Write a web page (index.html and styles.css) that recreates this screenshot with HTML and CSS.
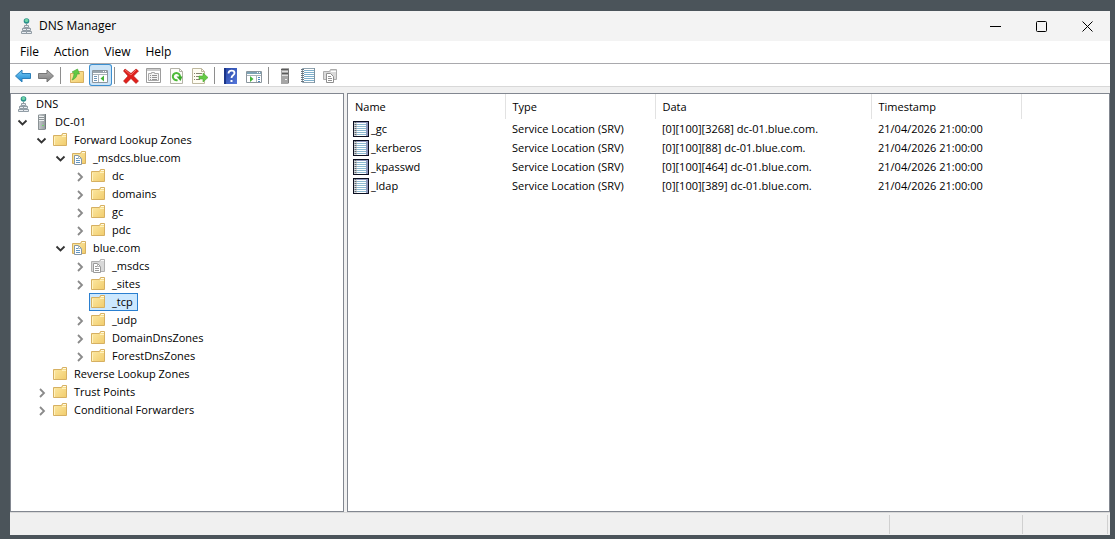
FILE: index.html
```html
<!DOCTYPE html>
<html lang="en">
  <head>
    <meta charset="utf-8" />
    <meta name="viewport" content="width=device-width, initial-scale=1" />
    <title>DNS Manager</title>
    <link rel="stylesheet" href="styles.css">
  </head>
  <body>
    <!-- Icon sprite -->
    <svg class="sprite" aria-hidden="true">
      <defs>
        <linearGradient id="gold" x1="0" y1="0" x2="1" y2="1">
          <stop offset="0" stop-color="#fdeaa6" />
          <stop offset="1" stop-color="#f1cc6c" />
        </linearGradient>
        <linearGradient id="blue" x1="0" y1="0" x2="0" y2="1">
          <stop offset="0" stop-color="#7ed0f7" />
          <stop offset="1" stop-color="#1583d0" />
        </linearGradient>
        <linearGradient id="grey" x1="0" y1="0" x2="0" y2="1">
          <stop offset="0" stop-color="#b5b5b5" />
          <stop offset="1" stop-color="#7c7c7c" />
        </linearGradient>
        <linearGradient id="steel" x1="0" y1="0" x2="1" y2="0">
          <stop offset="0" stop-color="#c9ced0" />
          <stop offset="1" stop-color="#8f9699" />
        </linearGradient>
        <linearGradient id="help" x1="0" y1="0" x2="1" y2="1">
          <stop offset="0" stop-color="#2444a4" />
          <stop offset="1" stop-color="#5577da" />
        </linearGradient>
      </defs>

      <symbol id="dns" viewBox="0 0 16 16">
        <path d="M8.500 6v3M5 11v-1h7v1" fill="none" stroke="#8c979f" />
        <circle cx="8.500" cy="3" r="2.800" fill="#2b8f8c" />
        <path d="M6.500 2l2-1.500 2 1.500-1 2h-2z" fill="#6fd3a5" />
        <path d="M6.500 7.500h4v2h-4zM4.500 10.500h4v2h-4zM8.500 10.500h4v2h-4zM3.500 13.500h5v2h-5zM8.500 13.500h5v2h-5z" fill="#e9edf1" stroke="#919ca5" />
      </symbol>

      <symbol id="server" viewBox="0 0 16 16">
        <path d="M4 1l1-1h7v15l-1 1H4z" fill="url(#steel)" />
        <path d="M4.500 1v14.500h6" fill="none" stroke="#8b9295" />
        <path d="M11.500 0v15" stroke="#737a7e" />
        <path d="M5 2.500h5M5 4.500h5M5 6.500h5" stroke="#eef1f2" />
        <path d="M5 3.500h5M5 5.500h5" stroke="#8b9295" />
        <path d="M8 11h2v1H8z" fill="#6fd16a" />
      </symbol>

      <symbol id="folder" viewBox="0 0 16 16">
        <path d="M.5 3.500h8l1-2h4v12H.5z" fill="url(#gold)" stroke="#d6b062" />
        <path d="M10 2.500h3" stroke="#fffbe6" />
        <path d="M1.500 5v8M9 4.500h4" stroke="#fff2bf" fill="none" />
      </symbol>

      <symbol id="zone" viewBox="0 0 16 16">
        <path d="M.5 3.500h8l1-2h4v12H.5z" fill="url(#gold)" stroke="#d6b062" />
        <path d="M10 2.500h3" stroke="#fffbe6" />
        <path d="M2.500 5.500h4l3 3v6h-7z" fill="#fff" stroke="#8797a5" />
        <path d="M6.500 5.500v3h3" fill="none" stroke="#a9b6c0" />
        <path d="M4 8.500h2M4 10.500h4M4 12.500h4" stroke="#5f95c2" />
      </symbol>

      <symbol id="delegation" viewBox="0 0 16 16">
        <path d="M.5 3.500h8l1-2h4v12H.5z" fill="#d9d9d9" stroke="#b0b0b0" />
        <path d="M10 2.500h3" stroke="#f8f8f8" />
        <path d="M2.500 5.500h4l3 3v6h-7z" fill="#fff" stroke="#9a9a9a" />
        <path d="M6.500 5.500v3h3" fill="none" stroke="#b4b4b4" />
        <path d="M4 8.500h2M4 10.500h4M4 12.500h4" stroke="#9a9a9a" />
      </symbol>

      <symbol id="notebook" viewBox="0 0 16 16">
        <path d="M2.500.5h12v14h-12z" fill="#fff" stroke="#8fa3b0" />
        <path d="M4 2.500h10M4 4.500h10M4 6.500h10M4 8.500h10M4 10.500h10M4 12.500h10" stroke="#7fb0cc" />
        <path d="M2.500 1v14" stroke="#6a7680" stroke-width="3" stroke-dasharray="1 1" />
        <path d="M14.500 0v15" stroke="#7d92a0" />
      </symbol>

      <symbol id="record" viewBox="0 0 16 16">
        <path d="M0 0h16v16H0z" fill="#0b0e20" />
        <path d="M1 1h14v14H1z" fill="#8d97bd" />
        <path d="M4 2h9v13H4z" fill="#fff" />
        <path d="M4 3.500h9M4 5.500h9M4 7.500h9M4 9.500h9M4 11.500h9M4 13.500h9" stroke="#8cbad2" />
        <path d="M1 1h3v14H1z" fill="#d5dade" />
        <path d="M2.500 1v14" stroke="#5f6970" stroke-width="2" stroke-dasharray="1 1" />
      </symbol>

      <symbol id="back" viewBox="0 0 16 16">
        <path d="M.5 8L7 2v3.500h8.500v5H7V14z" fill="url(#blue)" stroke="#2b7fb9" stroke-linejoin="round" />
      </symbol>

      <symbol id="forward" viewBox="0 0 16 16">
        <path d="M15.500 8L9 2v3.500H.5v5H9V14z" fill="url(#grey)" stroke="#777" stroke-linejoin="round" />
      </symbol>

      <symbol id="up" viewBox="0 0 16 16">
        <path d="M1.500 5.500h7l1-2h5v11h-13z" fill="url(#gold)" stroke="#d6b062" />
        <path d="M3 12c3-1 5-3 5-6h2.500L8.500 1 3 4l2 1c0 3-1 5-2 7z" fill="#62c944" stroke="#43a532" stroke-width=".6" />
      </symbol>

      <symbol id="show-tree" viewBox="0 0 16 16">
        <path d="M.5 2.500h15v12H.5z" fill="#fff" stroke="#8b969e" />
        <path d="M1 4h14" stroke="#9aa5ad" stroke-width="2" />
        <path d="M11 3.500h1M13 3.500h1" stroke="#fff" />
        <path d="M6.500 6v8M1 6.500h14" stroke="#aab3ba" />
        <path d="M2 8.500h3M2 10.500h3M2 12.500h3" stroke="#6f96b8" />
        <path d="M12 7.500v6L8.500 10.500z" fill="#44b43a" />
      </symbol>

      <symbol id="delete" viewBox="0 0 16 16">
        <path d="M2 1l6 4.500L13 1l2.500 2-5 5 5 5-2.500 2.500-5-5-5 5L.5 13l4.500-5L.5 3z" fill="#e0201c" stroke="#b31613" stroke-width=".6" />
        <path d="M2 2l6 5 5-5" fill="none" stroke="#f26a61" />
      </symbol>

      <symbol id="properties" viewBox="0 0 16 16">
        <path d="M.5.5h14v14H.5z" fill="#fff" stroke="#9d9d9d" />
        <path d="M1 2h13" stroke="#cbcbcb" stroke-width="2" />
        <path d="M2.500 5.500h3v-1h3v1h4v7h-10z" fill="#f3f3f3" stroke="#a9a9a9" />
        <path d="M4 7.500h1M6 7.500h5M4 9.500h1M6 9.500h5M4 11.500h1M6 11.500h5" stroke="#929292" />
      </symbol>

      <symbol id="refresh" viewBox="0 0 16 16">
        <path d="M1.500.5h9l3 3v12h-12z" fill="#fcfcf8" stroke="#b4b3a8" />
        <path d="M10.500.5v3h3" fill="none" stroke="#b4b3a8" />
        <path d="M11 9a3.600 3.600 0 1 0-2.500 3" fill="none" stroke="#4dba38" stroke-width="2" />
        <path d="M7.500 8.500h6L11.500 13z" fill="#3ba52c" />
      </symbol>

      <symbol id="export" viewBox="0 0 16 16">
        <path d="M.5.5h9l3 3v12H.5z" fill="#fffdf2" stroke="#beb89e" />
        <path d="M9.500.5v3h3" fill="none" stroke="#beb89e" />
        <path d="M2 5.500h1M4 5.500h6M2 8.500h1M4 8.500h4M2 11.500h1M4 11.500h4" stroke="#86836f" />
        <path d="M7 8h4V5l5 4.500L11 14v-3H7z" fill="#64cb45" stroke="#48a92f" stroke-width=".6" />
      </symbol>

      <symbol id="book" viewBox="0 0 16 16">
        <path d="M1 0h13v16H1z" fill="url(#help)" />
        <path d="M1 0h2v16H1z" fill="#1b3588" />
        <path d="M5.500 5.500c0-4 6-3.500 6-.5 0 2.500-3 2-3 5" fill="none" stroke="#fff" stroke-width="1.800" />
        <path d="M7.500 12h2v2h-2z" fill="#fff" />
      </symbol>

      <symbol id="action-pane" viewBox="0 0 16 16">
        <path d="M.5 3.500h15v11H.5z" fill="#fff" stroke="#8b969e" />
        <path d="M1 5h14" stroke="#7da2b4" stroke-width="2" />
        <path d="M11 4.500h1M13 4.500h1" stroke="#fff" />
        <path d="M10.500 7v7M1 7.500h14" stroke="#aab3ba" />
        <path d="M12 9.500h2M12 11.500h2M12 13.500h2" stroke="#4f86bd" />
        <path d="M4 8v6L7.500 11z" fill="#44b43a" />
      </symbol>

      <symbol id="new-server" viewBox="0 0 16 16">
        <path d="M4 1l1-1h7v15l-1 1H4z" fill="#a6a6a6" />
        <path d="M4 1.500h7M5 5.500h6" stroke="#5a5a5a" />
        <path d="M5 3.500h6M5 7.500h6" stroke="#dedede" />
        <path d="M11.500 1v14" stroke="#777" />
        <path d="M8 11h2v1H8z" fill="#eee" />
      </symbol>

      <symbol id="new-zone" viewBox="0 0 16 16">
        <path d="M.5 3.500h6l1-2h6v10H.5z" fill="#dadada" stroke="#acacac" />
        <path d="M8 3.500h5" stroke="#fff" />
        <path d="M3.500 5.500h4l3 3v6h-7z" fill="#fff" stroke="#8f8f8f" />
        <path d="M5 8.500h3M5 10.500h4M5 12.500h4" stroke="#929292" />
      </symbol>

      <symbol id="open" viewBox="0 0 16 16">
        <path d="M4.500 6.500l4 4 4-4" fill="none" stroke="#333" stroke-width="1.800" />
      </symbol>

      <symbol id="closed" viewBox="0 0 16 16">
        <path d="M7 5l4 4-4 4" fill="none" stroke="#8a8a8a" stroke-width="1.800" />
      </symbol>
    </svg>

    <div class="window">
      <header class="titlebar">
        <svg class="icon"><use href="#dns" /></svg>
        <h1 class="title">DNS Manager</h1>
        <div class="caption-buttons">
          <button class="caption-btn" aria-label="Minimize">
            <svg class="caption-icon" viewBox="0 0 11 11"><path d="M0 5.500h11" /></svg>
          </button>
          <button class="caption-btn" aria-label="Maximize">
            <svg class="caption-icon" viewBox="0 0 11 11"><rect x=".5" y=".5" width="10" height="10" rx="1" /></svg>
          </button>
          <button class="caption-btn" aria-label="Close">
            <svg class="caption-icon" viewBox="0 0 11 11"><path d="M.5.5l10 10M10.500.5l-10 10" /></svg>
          </button>
        </div>
      </header>

      <nav class="menubar">
        <button class="menu-item">File</button>
        <button class="menu-item">Action</button>
        <button class="menu-item">View</button>
        <button class="menu-item">Help</button>
      </nav>

      <div class="toolbar" role="toolbar" aria-label="Standard">
        <button class="tool" aria-label="Back"><svg class="icon"><use href="#back" /></svg></button>
        <button class="tool" aria-label="Forward"><svg class="icon"><use href="#forward" /></svg></button>
        <span class="separator"></span>
        <button class="tool" aria-label="Up one level"><svg class="icon"><use href="#up" /></svg></button>
        <button class="tool active" aria-label="Show/Hide console tree" aria-pressed="true"><svg class="icon"><use href="#show-tree" /></svg></button>
        <span class="separator"></span>
        <button class="tool" aria-label="Delete"><svg class="icon"><use href="#delete" /></svg></button>
        <button class="tool" aria-label="Properties"><svg class="icon"><use href="#properties" /></svg></button>
        <button class="tool" aria-label="Refresh"><svg class="icon"><use href="#refresh" /></svg></button>
        <button class="tool" aria-label="Export list"><svg class="icon"><use href="#export" /></svg></button>
        <span class="separator"></span>
        <button class="tool" aria-label="Help"><svg class="icon"><use href="#book" /></svg></button>
        <button class="tool" aria-label="Show/Hide action pane"><svg class="icon"><use href="#action-pane" /></svg></button>
        <span class="separator"></span>
        <button class="tool" aria-label="New server"><svg class="icon"><use href="#new-server" /></svg></button>
        <button class="tool" aria-label="New record"><svg class="icon"><use href="#notebook" /></svg></button>
        <button class="tool" aria-label="New zone"><svg class="icon"><use href="#new-zone" /></svg></button>
      </div>

      <main class="panes">
        <div class="pane tree">
          <div class="row"><button class="node"><svg class="icon"><use href="#dns" /></svg>DNS</button></div>
          <ul class="root">
            <li>
              <div class="row"><button class="toggle" aria-label="Collapse"><svg class="icon"><use href="#open" /></svg></button><button class="node"><svg class="icon"><use href="#server" /></svg>DC-01</button></div>
              <ul>
                <li>
                  <div class="row"><button class="toggle" aria-label="Collapse"><svg class="icon"><use href="#open" /></svg></button><button class="node"><svg class="icon"><use href="#folder" /></svg>Forward Lookup Zones</button></div>
                  <ul>
                    <li>
                      <div class="row"><button class="toggle" aria-label="Collapse"><svg class="icon"><use href="#open" /></svg></button><button class="node"><svg class="icon"><use href="#zone" /></svg>_msdcs.blue.com</button></div>
                      <ul>
                        <li class="row"><button class="toggle" aria-label="Expand"><svg class="icon"><use href="#closed" /></svg></button><button class="node"><svg class="icon"><use href="#folder" /></svg>dc</button></li>
                        <li class="row"><button class="toggle" aria-label="Expand"><svg class="icon"><use href="#closed" /></svg></button><button class="node"><svg class="icon"><use href="#folder" /></svg>domains</button></li>
                        <li class="row"><button class="toggle" aria-label="Expand"><svg class="icon"><use href="#closed" /></svg></button><button class="node"><svg class="icon"><use href="#folder" /></svg>gc</button></li>
                        <li class="row"><button class="toggle" aria-label="Expand"><svg class="icon"><use href="#closed" /></svg></button><button class="node"><svg class="icon"><use href="#folder" /></svg>pdc</button></li>
                      </ul>
                    </li>
                    <li>
                      <div class="row"><button class="toggle" aria-label="Collapse"><svg class="icon"><use href="#open" /></svg></button><button class="node"><svg class="icon"><use href="#zone" /></svg>blue.com</button></div>
                      <ul>
                        <li class="row"><button class="toggle" aria-label="Expand"><svg class="icon"><use href="#closed" /></svg></button><button class="node"><svg class="icon"><use href="#delegation" /></svg>_msdcs</button></li>
                        <li class="row"><button class="toggle" aria-label="Expand"><svg class="icon"><use href="#closed" /></svg></button><button class="node"><svg class="icon"><use href="#folder" /></svg>_sites</button></li>
                        <li class="row leaf"><button class="node selected"><svg class="icon"><use href="#folder" /></svg>_tcp</button></li>
                        <li class="row"><button class="toggle" aria-label="Expand"><svg class="icon"><use href="#closed" /></svg></button><button class="node"><svg class="icon"><use href="#folder" /></svg>_udp</button></li>
                        <li class="row"><button class="toggle" aria-label="Expand"><svg class="icon"><use href="#closed" /></svg></button><button class="node"><svg class="icon"><use href="#folder" /></svg>DomainDnsZones</button></li>
                        <li class="row"><button class="toggle" aria-label="Expand"><svg class="icon"><use href="#closed" /></svg></button><button class="node"><svg class="icon"><use href="#folder" /></svg>ForestDnsZones</button></li>
                      </ul>
                    </li>
                  </ul>
                </li>
                <li class="row leaf"><button class="node"><svg class="icon"><use href="#folder" /></svg>Reverse Lookup Zones</button></li>
                <li class="row"><button class="toggle" aria-label="Expand"><svg class="icon"><use href="#closed" /></svg></button><button class="node"><svg class="icon"><use href="#folder" /></svg>Trust Points</button></li>
                <li class="row"><button class="toggle" aria-label="Expand"><svg class="icon"><use href="#closed" /></svg></button><button class="node"><svg class="icon"><use href="#folder" /></svg>Conditional Forwarders</button></li>
              </ul>
            </li>
          </ul>
        </div>

        <div class="pane list">
          <table class="records">
            <colgroup>
              <col class="col-name" />
              <col class="col-type" />
              <col class="col-data" />
              <col class="col-time" />
              <col />
            </colgroup>
            <thead>
              <tr><th>Name</th><th>Type</th><th>Data</th><th>Timestamp</th><td></td></tr>
            </thead>
            <tbody>
              <tr>
                <td><span class="record"><svg class="icon"><use href="#record" /></svg>_gc</span></td>
                <td>Service Location (SRV)</td>
                <td>[0][100][3268] dc-01.blue.com.</td>
                <td>21/04/2026 21:00:00</td>
                <td></td>
              </tr>
              <tr>
                <td><span class="record"><svg class="icon"><use href="#record" /></svg>_kerberos</span></td>
                <td>Service Location (SRV)</td>
                <td>[0][100][88] dc-01.blue.com.</td>
                <td>21/04/2026 21:00:00</td>
                <td></td>
              </tr>
              <tr>
                <td><span class="record"><svg class="icon"><use href="#record" /></svg>_kpasswd</span></td>
                <td>Service Location (SRV)</td>
                <td>[0][100][464] dc-01.blue.com.</td>
                <td>21/04/2026 21:00:00</td>
                <td></td>
              </tr>
              <tr>
                <td><span class="record"><svg class="icon"><use href="#record" /></svg>_ldap</span></td>
                <td>Service Location (SRV)</td>
                <td>[0][100][389] dc-01.blue.com.</td>
                <td>21/04/2026 21:00:00</td>
                <td></td>
              </tr>
            </tbody>
          </table>
        </div>
      </main>

      <footer class="statusbar">
        <span class="status-main"></span>
        <span class="status-info"></span>
        <span class="status-progress"></span>
      </footer>
    </div>
  </body>
</html>
```

FILE: styles.css
```css
* {
  box-sizing: border-box;
}

body {
  display: flex;
  min-height: 100vh;
  margin: 0;
  padding: 11px 5px 4px 10px;
  background: #4b545a;
  color: #000;
  font-family: "Open Sans", sans-serif;
  font-size: 11px;
  line-height: 18px;
}

button {
  margin: 0;
  padding: 0;
  border: 0;
  background: none;
  color: inherit;
  font: inherit;
}

ul {
  margin: 0;
  padding: 0 0 0 19px;
  list-style: none;
}

.sprite {
  position: absolute;
  width: 0;
  height: 0;
}

.icon {
  display: block;
  flex: none;
  width: 16px;
  height: 16px;
}

.window {
  display: flex;
  flex: 1;
  flex-direction: column;
  min-width: 0;
  background: #f0f0f0;
}

/* Title bar */
.titlebar {
  display: flex;
  align-items: center;
  height: 30px;
  padding-left: 8px;
  background: #f3f3f3;
}

.title {
  margin: 0 0 0 5px;
  font-size: 12px;
  font-weight: 400;
}

.caption-buttons {
  display: flex;
  align-self: stretch;
  margin-left: auto;
}

.caption-btn {
  display: flex;
  align-items: center;
  justify-content: center;
  width: 46px;
}

.caption-icon {
  width: 11px;
  height: 11px;
  fill: none;
  stroke: #000;
}

/* Menu and toolbar */
.menubar {
  display: flex;
  gap: 15px;
  height: 22px;
  padding-left: 10px;
  background: #fff;
}

.menu-item {
  font-size: 12px;
}

.toolbar {
  display: flex;
  height: 24px;
  padding-left: 2px;
  border-top: 1px solid #a9a9ad;
  border-bottom: 1px solid #d8d8d8;
  background: #fff;
}

.tool {
  display: flex;
  align-items: center;
  width: 23px;
  padding: 1px 4px 0 3px;
  border-radius: 3px;
}

.tool.active {
  background: #cce4f7;
  box-shadow: inset 0 0 0 1px #3c8fd0;
}

.separator {
  width: 8px;
  padding: 3px 0 2px;
}

.separator::before {
  content: "";
  display: block;
  width: 1px;
  height: 100%;
  margin-left: 2px;
  background: #8e8e8e;
}

/* Panes */
.panes {
  display: flex;
  flex: 1;
  gap: 3px;
  padding: 6px 0 0;
}

.pane {
  border: 1px solid #828790;
  background: #fff;
}

/* Console tree */
.tree {
  flex: 0 0 334px;
  padding: 1px 0 0 2px;
}

.root {
  padding-left: 1px;
}

.row {
  display: flex;
  height: 18px;
}

.row.leaf {
  padding-left: 18px;
}

.toggle {
  width: 18px;
}

.node {
  display: flex;
  align-items: center;
  gap: 5px;
  padding: 0 4px 0 1px;
  border: 1px solid transparent;
  line-height: 16px;
  white-space: nowrap;
}

.node.selected {
  border-color: #2a7fd0;
  background: #cce8ff;
}

/* Record list */
.list {
  flex: 1;
  min-width: 0;
}

.records {
  width: 100%;
  table-layout: fixed;
  border-collapse: collapse;
}

.records th,
.records td {
  height: 19px;
  padding: 0 0 0 7px;
  font-weight: 400;
  text-align: left;
  white-space: nowrap;
}

.records th {
  height: 25px;
  border-right: 1px solid #e2e2e2;
}

.records td:first-child {
  padding-left: 5px;
}

.col-name {
  width: 157px;
}

.col-type,
.col-time {
  width: 150px;
}

.col-data {
  width: 216px;
}

.record {
  display: flex;
  align-items: center;
  gap: 2px;
}

/* Status bar */
.statusbar {
  display: flex;
  height: 23px;
  padding: 2px 2px 1px 0;
  border-top: 1px solid #d9d9d9;
}

.statusbar span {
  border-right: 1px solid #d0d0d0;
}

.status-main {
  flex: 1;
}

.status-info {
  width: 133px;
}

.status-progress {
  width: 85px;
}
```
